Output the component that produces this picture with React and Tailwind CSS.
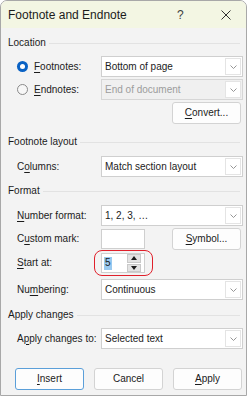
const FONT = { fontFamily: '"Segoe UI", "Liberation Sans", Arial, sans-serif' }

function Chevron() {
  return (
    <svg className="w-[7px] h-[4px]" viewBox="0 0 7 4" fill="none">
      <path d="M0.5 0.5L3.5 3.5L6.5 0.5" stroke="#8a8a8a" strokeWidth="0.9" />
    </svg>
  )
}

function Key({ children }) {
  return <span className="underline underline-offset-2 decoration-[0.5px]">{children}</span>
}

function Select({ value, disabled }) {
  return (
    <div
      className={`w-[142px] h-[21px] flex items-center border ${
        disabled ? 'bg-[#f0f0f0] border-[#d6d6d6] text-[#9c9c9c]' : 'bg-white border-[#cfcfcf] text-[#1b1b1b]'
      }`}
    >
      <span className="flex-1 pl-[3px] truncate">{value}</span>
      <div className="w-[16px] h-[17px] mr-[1px] flex items-center justify-center border border-[#e4e4e4] bg-white">
        <Chevron />
      </div>
    </div>
  )
}

function Button({ children, primary, className = '' }) {
  return (
    <div
      className={`w-[69px] h-[22px] flex items-center justify-center rounded-[3px] bg-[#fdfdfd] text-[#1b1b1b] ${
        primary ? 'border border-[#5b9fd9]' : 'border border-[#d3d3d3]'
      } ${className}`}
    >
      {children}
    </div>
  )
}

function Header({ label, className = '' }) {
  return (
    <div className={`h-[14px] flex items-center gap-[3px] pl-[7px] pr-[6px] ${className}`}>
      <span className="text-[#1b1b1b]">{label}</span>
      <div className="flex-1 h-px bg-[#e2e2e2]" />
    </div>
  )
}

function Row({ label, children, className = '' }) {
  return (
    <div className={`flex items-center pl-[16px] ${className}`}>
      <span className="w-[84px] text-[#1b1b1b]">{label}</span>
      {children}
    </div>
  )
}

function Radio({ checked }) {
  return checked ? (
    <div className="w-[11px] h-[11px] rounded-full bg-[#0a62c4] flex items-center justify-center">
      <div className="w-[5px] h-[5px] rounded-full bg-white" />
    </div>
  ) : (
    <div className="w-[11px] h-[11px] rounded-full border border-[#8a8a8a] bg-[#f7f7f7]" />
  )
}

export default function App() {
  return (
    <div className="w-[249px] h-[397px] bg-white text-[10px] leading-none" style={FONT}>
      <div className="w-[247px] h-[396px] border border-[#a8a8a8] rounded-t-[7px] bg-[#f3f3f3] overflow-hidden flex flex-col">

        {/* Title bar */}
        <div className="h-[27px] shrink-0 bg-[#f3f6e3] flex items-center pl-[7px] text-[12px] text-[#1b1b1b]">
          <span className="flex-1">Footnote and Endnote</span>
          <span className="w-[10px] text-[12px] text-[#404040] mr-[34px]">?</span>
          <svg className="w-[10px] h-[10px] mr-[15px]" viewBox="0 0 10 10">
            <path d="M0.5 0.5L9.5 9.5M9.5 0.5L0.5 9.5" stroke="#1b1b1b" strokeWidth="0.9" />
          </svg>
        </div>

        {/* Location */}
        <Header label="Location" className="mt-[8px]" />
        <div className="mt-[6px] flex items-center pl-[16px]">
          <div className="w-[84px] flex items-center gap-[6px] text-[#1b1b1b]">
            <Radio checked />
            <span><Key>F</Key>ootnotes:</span>
          </div>
          <Select value="Bottom of page" />
        </div>
        <div className="mt-[2px] flex items-center pl-[16px]">
          <div className="w-[84px] flex items-center gap-[6px] text-[#1b1b1b]">
            <Radio />
            <span><Key>E</Key>ndnotes:</span>
          </div>
          <Select value="End of document" disabled />
        </div>
        <div className="mt-[2px] flex justify-end pr-[5px]">
          <Button><span><Key>C</Key>onvert...</span></Button>
        </div>

        {/* Footnote layout */}
        <Header label="Footnote layout" className="mt-[11px]" />
        <Row label={<>C<Key>o</Key>lumns:</>} className="mt-[7px]">
          <Select value="Match section layout" />
        </Row>

        {/* Format */}
        <Header label="Format" className="mt-[7px]" />
        <Row label={<><Key>N</Key>umber format:</>} className="mt-[7px]">
          <Select value="1, 2, 3, …" />
        </Row>
        <div className="mt-[2px] flex items-center pl-[16px] pr-[5px]">
          <span className="w-[84px] text-[#1b1b1b]">C<Key>u</Key>stom mark:</span>
          <div className="w-[44px] h-[20px] bg-white border border-[#cfcfcf]" />
          <div className="flex-1" />
          <Button className="h-[20px]"><span><Key>S</Key>ymbol...</span></Button>
        </div>
        <Row label={<><Key>S</Key>tart at:</>} className="mt-[3px]">
          <div className="relative">
            <div className="w-[44px] h-[20px] bg-white border border-[#cfcfcf] flex items-center">
              <span className="ml-[2px] px-[1px] bg-[#99c9ef] text-[#1b1b1b] h-[13px] flex items-center">5</span>
              <div className="flex-1" />
              <div className="w-[14px] h-[18px] mr-[3px] flex flex-col gap-[1px]">
                <div className="flex-1 bg-[#e3e3e3] border border-[#c9c9c9] flex items-center justify-center">
                  <svg className="w-[6px] h-[4px]" viewBox="0 0 6 4"><path d="M0 4L3 0L6 4Z" fill="#1b1b1b" /></svg>
                </div>
                <div className="flex-1 bg-[#e3e3e3] border border-[#c9c9c9] flex items-center justify-center">
                  <svg className="w-[6px] h-[4px]" viewBox="0 0 6 4"><path d="M0 0L3 4L6 0Z" fill="#1b1b1b" /></svg>
                </div>
              </div>
            </div>
            <div className="absolute left-[-7px] top-[-3px] w-[59px] h-[26px] rounded-[8px] border-[1.5px] border-[#e0202b]" />
          </div>
        </Row>
        <Row label={<>Nu<Key>m</Key>bering:</>} className="mt-[6px]">
          <Select value="Continuous" />
        </Row>

        {/* Apply changes */}
        <Header label="Apply changes" className="mt-[8px]" />
        <Row label={<>A<Key>p</Key>ply changes to:</>} className="mt-[6px]">
          <Select value="Selected text" />
        </Row>

        {/* Buttons */}
        <div className="mt-[19px] flex gap-[10px] pl-[14px]">
          <Button primary><span><Key>I</Key>nsert</span></Button>
          <Button>Cancel</Button>
          <Button><span><Key>A</Key>pply</span></Button>
        </div>
      </div>
    </div>
  )
}
